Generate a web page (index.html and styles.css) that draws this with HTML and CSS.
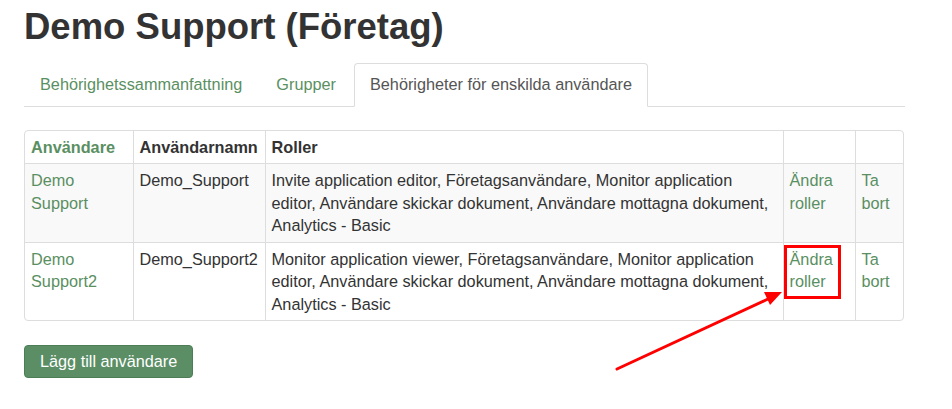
FILE: index.html
```html
<!DOCTYPE html>
<html lang="sv">
<head>
  <meta charset="UTF-8">
  <title>Demo Support (Företag)</title>
  <link rel="stylesheet" href="styles.css">
</head>
<body>
<div class="page">
  <h1 class="title">Demo Support (Företag)</h1>
  <ul class="tabs">
    <li><a href="#">Behörighetssammanfattning</a></li>
    <li><a href="#">Grupper</a></li>
    <li class="active"><a href="#">Behörigheter för enskilda användare</a></li>
  </ul>
  <div class="user-table-wrap">
    <table class="user-table">
      <colgroup>
        <col class="c-name"><col class="c-user"><col class="c-roles"><col class="c-edit"><col class="c-del">
      </colgroup>
      <thead>
        <tr><th><a href="#">Användare</a></th><th>Användarnamn</th><th>Roller</th><th></th><th></th></tr>
      </thead>
      <tbody>
        <tr>
          <td><a href="#">Demo Support</a></td>
          <td>Demo_Support</td>
          <td>Invite application editor, Företagsanvändare, Monitor application editor, Användare skickar dokument, Användare mottagna dokument, Analytics - Basic</td>
          <td><a href="#">Ändra roller</a></td>
          <td><a href="#">Ta bort</a></td>
        </tr>
        <tr>
          <td><a href="#">Demo Support2</a></td>
          <td>Demo_Support2</td>
          <td>Monitor application viewer, Företagsanvändare, Monitor application editor, Användare skickar dokument, Användare mottagna dokument, Analytics - Basic</td>
          <td><a href="#">Ändra roller</a></td>
          <td><a href="#">Ta bort</a></td>
        </tr>
      </tbody>
    </table>
  </div>
  <button class="btn-add">Lägg till användare</button>
</div>
<svg class="annotation" width="952" height="409" viewBox="0 0 952 409" aria-hidden="true">
  <rect x="785.5" y="246.5" width="54" height="51" fill="none" stroke="#f00" stroke-width="3"/>
  <line x1="617" y1="369" x2="768" y2="299" stroke="#f00" stroke-width="3" stroke-linecap="round"/>
  <polygon points="782,292 764,292 770,305" fill="#f00"/>
</svg>
</body>
</html>
```

FILE: styles.css
```css
body{margin:0;font-family:"Liberation Sans",Arial,sans-serif;font-size:16.25px;color:#333;background:#fff;}
a{color:#5a8f62;text-decoration:none;}
.page{width:881px;padding:7px 0 0 24px;}
.title{margin:0 0 16px;font-size:36.5px;line-height:1.1;font-weight:bold;color:#333;}
.tabs{display:flex;list-style:none;margin:0;padding:0;border-bottom:1px solid #ddd;}
.tabs li{margin:0 2px -1px 0;}
.tabs a{display:block;padding:10px 15px;line-height:21.4px;border:1px solid transparent;border-radius:4px 4px 0 0;}
.tabs .active a{color:#555;background:#fff;border-color:#ddd #ddd transparent;}
.user-table-wrap{margin-top:23px;border:1px solid #ddd;border-radius:4px;overflow:hidden;width:878px;}
.user-table{width:100%;border-collapse:collapse;table-layout:fixed;line-height:22.5px;}
.user-table th,.user-table td{padding:5px 6px;vertical-align:top;text-align:left;border-left:1px solid #ddd;border-top:1px solid #ddd;}
.user-table th:first-child,.user-table td:first-child{border-left:0;}
.user-table thead th{border-top:0;font-weight:bold;}
.user-table tbody tr:nth-child(odd){background:#f9f9f9;}
.c-name{width:108px;}
.c-user{width:132px;}
.c-roles{width:518px;}
.c-edit{width:72px;}
.btn-add{margin-top:24px;padding:5px 15px;font:16.25px/21px "Liberation Sans",Arial,sans-serif;color:#fff;background:#5b8e65;border:1px solid #4d7d56;border-radius:4px;}
.annotation{position:absolute;left:0;top:0;pointer-events:none;}
```
